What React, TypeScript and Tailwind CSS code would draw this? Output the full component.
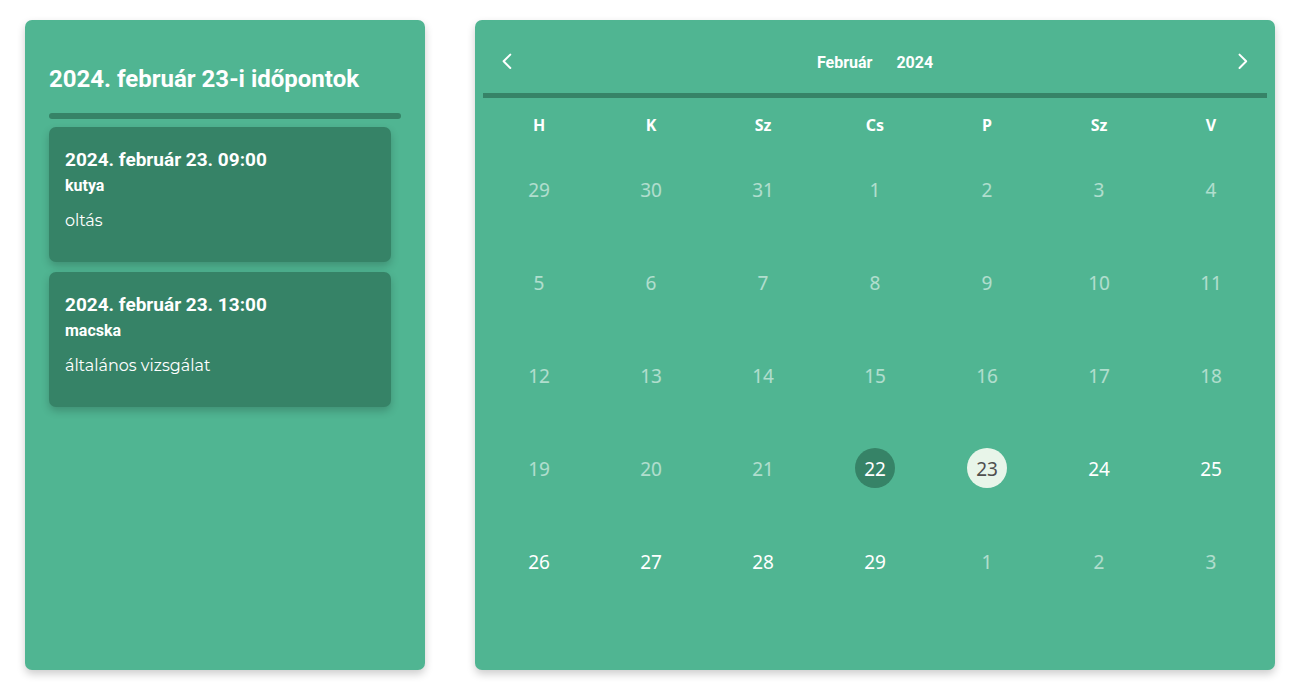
import { useState } from "react";

type Appointment = { time: string; species: string; note: string };
type Day = { id: string; day: number; muted: boolean };

const appointments: Appointment[] = [
  { time: "2024. február 23. 09:00", species: "kutya", note: "oltás" },
  { time: "2024. február 23. 13:00", species: "macska", note: "általános vizsgálat" },
];

const weekdays = ["H", "K", "Sz", "Cs", "P", "Sz", "V"];

const days: Day[] = [
  ...[29, 30, 31].map((day) => ({ id: `jan-${day}`, day, muted: true })),
  ...Array.from({ length: 29 }, (_, i) => ({ id: `feb-${i + 1}`, day: i + 1, muted: i + 1 < 22 })),
  ...[1, 2, 3].map((day) => ({ id: `mar-${day}`, day, muted: true })),
];

const weeks = Array.from({ length: 5 }, (_, i) => days.slice(i * 7, i * 7 + 7));

function AppointmentCard({ time, species, note }: Appointment) {
  return (
    <li className="min-h-[135px] rounded-[7px] bg-[#368367] px-4 pt-[21px] text-white shadow-[0_4px_8px_rgba(0,0,0,0.2)]">
      <h2 className="text-[19px] leading-6 font-bold">{time}</h2>
      <p className="mt-[2px] text-base leading-6 font-bold">{species}</p>
      <p className="mt-[11px] font-['Montserrat','Noto_Sans',sans-serif] text-base leading-6">{note}</p>
    </li>
  );
}

function Chevron({ points }: { points: string }) {
  return (
    <svg
      viewBox="0 0 24 24"
      className="size-6"
      fill="none"
      stroke="currentColor"
      strokeWidth="2"
      strokeLinecap="round"
      strokeLinejoin="round"
      aria-hidden="true"
    >
      <polyline points={points} />
    </svg>
  );
}

function dayStyle(day: Day, selected: string) {
  if (day.id === selected) return "bg-[#e8f5e9] text-[#4f4f4f]";
  if (day.id === "feb-22") return "bg-[#368367] text-white";
  return day.muted ? "text-white/55" : "text-white";
}

export default function App() {
  const [selected, setSelected] = useState("feb-23");

  return (
    <main className="flex gap-[50px] bg-white py-5 pr-5 pl-[25px] font-['Roboto',sans-serif]">
      <section className="min-h-[650px] w-[400px] shrink-0 rounded-[7px] bg-[#50b592] px-6 shadow-[0_4px_8px_rgba(0,0,0,0.2)]">
        <h1 className="pt-[45px] text-2xl leading-7 font-bold text-white">2024. február 23-i időpontok</h1>
        <div className="mt-5 h-[6px] rounded-full bg-[#368367]" />
        <ul className="mt-2 mr-[10px] flex flex-col gap-[10px]">
          {appointments.map((item) => (
            <AppointmentCard key={item.time} {...item} />
          ))}
        </ul>
      </section>

      <section className="min-h-[650px] max-w-[800px] flex-1 rounded-[7px] bg-[#50b592] px-2 text-white shadow-[0_4px_8px_rgba(0,0,0,0.2)]">
        <header className="flex h-[73px] items-center justify-between px-3 pt-3">
          <button type="button" aria-label="Előző hónap">
            <Chevron points="15.3,3.6 8.6,10.3 15.3,17" />
          </button>
          <div className="flex gap-6 text-base leading-6 font-bold">
            <button type="button">Február</button>
            <button type="button">2024</button>
          </div>
          <button type="button" aria-label="Következő hónap">
            <Chevron points="8.5,3.6 15.2,10.3 8.5,17" />
          </button>
        </header>
        <table className="w-full table-fixed border-t-[5px] border-[#368367] font-['Noto_Sans',sans-serif]">
          <thead>
            <tr className="h-14">
              {weekdays.map((name, i) => (
                <th key={i} scope="col" className="p-0 text-base font-bold">{name}</th>
              ))}
            </tr>
          </thead>
          <tbody>
            {weeks.map((week) => (
              <tr key={week[0].id} className="h-[93px]">
                {week.map((day) => (
                  <td key={day.id} className="p-0 pt-[17px] text-center align-top">
                    <button
                      type="button"
                      onClick={() => setSelected(day.id)}
                      className={`size-10 rounded-full pt-[2px] text-[19px] leading-[38px] ${dayStyle(day, selected)}`}
                    >
                      {day.day}
                    </button>
                  </td>
                ))}
              </tr>
            ))}
          </tbody>
        </table>
      </section>
    </main>
  );
}
